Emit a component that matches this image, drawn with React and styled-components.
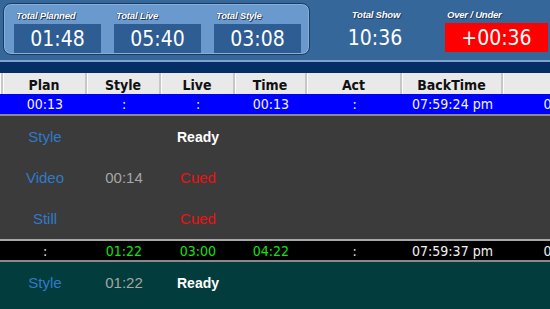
import React from "react";
import styled, { createGlobalStyle } from "styled-components";

const GlobalStyle = createGlobalStyle`
  html, body { margin: 0; padding: 0; background: #3b3b3b; overflow: hidden; }
  * { box-sizing: border-box; }
`;

const COLS = "3px 84px 74px 74px 72px 95px 101px 162px";
const TAB_FONT = `"DejaVu Sans Condensed", "DejaVu Sans", sans-serif`;
const ARIAL = `"Liberation Sans", Arial, sans-serif`;

const Screen = styled.div`
  width: 550px;
  height: 309px;
  overflow: hidden;
  background: #3b3b3b;
  display: flex;
  flex-direction: column;
`;

const TopBar = styled.div`
  height: 60px;
  flex: none;
  background: #36679b;
  display: flex;
  align-items: flex-start;
  padding: 3px 0 0 3px;
`;

const TotalsPanel = styled.div`
  width: 307px;
  height: 52px;
  border: 1px solid #1d3a60;
  border-radius: 8px;
  background: #6999cd;
  box-shadow: inset 0 0 0 1px #86b0dc;
  display: flex;
  gap: 13px;
  padding: 6px 0 0 10px;
`;

const Stat = styled.div`
  display: flex;
  flex-direction: column;
  align-items: flex-start;
  width: 87px;
`;

const Label = styled.div`
  font-family: ${ARIAL};
  font-weight: bold;
  font-style: italic;
  font-size: 9.5px;
  line-height: 12px;
  height: 12px;
  white-space: nowrap;
  color: #ffffff;
  padding-left: 2px;
  letter-spacing: -0.2px;
  text-shadow: 1px 1px 0 #1f3a5c, -0.5px -0.5px 0 #1f3a5c;
`;

const ValueBox = styled.div`
  margin-top: 2px;
  width: ${(p) => p.$w || "87px"};
  height: 29px;
  background: ${(p) => p.$bg || "#2d5d93"};
  color: #ffffff;
  font-family: ${TAB_FONT};
  font-size: 21px;
  display: flex;
  align-items: center;
  justify-content: center;
`;

const ShowBlock = styled.div`
  margin-left: 25px;
  width: 80px;
  display: flex;
  flex-direction: column;
  align-items: center;
  padding-top: 6px;
`;

const OverBlock = styled.div`
  margin-left: 30px;
  display: flex;
  flex-direction: column;
  padding-top: 6px;
`;

const Rule = styled.div`
  height: 2px;
  flex: none;
  background: #7fa2cc;
`;

const NavyBand = styled.div`
  height: 11px;
  flex: none;
  background: #052d66;
`;

const Row = styled.div`
  display: grid;
  grid-template-columns: ${COLS};
  width: 665px;
  flex: none;
  height: ${(p) => p.$h}px;
  background: ${(p) => p.$bg};
  align-items: center;
  border-top: ${(p) => p.$top || "none"};
  border-bottom: ${(p) => p.$bottom || "none"};
`;

const HeadCell = styled.div`
  height: 100%;
  display: flex;
  align-items: center;
  justify-content: center;
  padding-top: 2px;
  font-family: ${TAB_FONT};
  font-weight: bold;
  font-size: 14px;
  color: #111;
  border-right: 2px solid #c6c6c6;
  box-shadow: inset 1px 0 0 #fbfbfb;
  background: #e9e9e9;
`;

const Cell = styled.div`
  text-align: center;
  font-family: ${TAB_FONT};
  font-size: 14px;
  color: ${(p) => p.$c || "#f2f2ff"};
  white-space: nowrap;
`;

const DetailCell = styled.div`
  text-align: center;
  font-family: ${ARIAL};
  font-size: ${(p) => (p.$bold ? "14px" : "15px")};
  font-weight: ${(p) => (p.$bold ? "bold" : "normal")};
  color: ${(p) => p.$c};
  white-space: nowrap;
`;

const BLUE = "#3179c9";
const GRAY = "#a6a6a6";
const RED = "#f01010";
const GREEN = "#14e014";

const headers = ["", "Plan", "Style", "Live", "Time", "Act", "BackTime", ""];

function DetailRow({ bg, label, time, status, statusColor, bold }) {
  return (
    <Row $h={41} $bg={bg}>
      <span />
      <DetailCell $c={BLUE}>{label}</DetailCell>
      <DetailCell $c={GRAY}>{time}</DetailCell>
      <DetailCell $c={statusColor} $bold={bold}>{status}</DetailCell>
    </Row>
  );
}

export default function App() {
  return (
    <>
      <GlobalStyle />
      <Screen>
        <TopBar>
          <TotalsPanel>
            <Stat>
              <Label>Total Planned</Label>
              <ValueBox>01:48</ValueBox>
            </Stat>
            <Stat>
              <Label>Total Live</Label>
              <ValueBox>05:40</ValueBox>
            </Stat>
            <Stat>
              <Label>Total Style</Label>
              <ValueBox>03:08</ValueBox>
            </Stat>
          </TotalsPanel>
          <ShowBlock>
            <Label>Total Show</Label>
            <ValueBox $bg="transparent" $w="80px">10:36</ValueBox>
          </ShowBlock>
          <OverBlock>
            <Label>Over / Under</Label>
            <ValueBox $bg="#ff0000" $w="103px">+00:36</ValueBox>
          </OverBlock>
        </TopBar>
        <Rule />
        <NavyBand />
        <Row $h={21} $bg="#e9e9e9">
          {headers.map((h, i) => (
            <HeadCell key={i}>{h}</HeadCell>
          ))}
        </Row>
        <Row $h={22} $bg="#0000ff" $bottom="2px solid #8a8a8a">
          <span />
          <Cell>00:13</Cell>
          <Cell>:</Cell>
          <Cell>:</Cell>
          <Cell>00:13</Cell>
          <Cell>:</Cell>
          <Cell>07:59:24 pm</Cell>
          <Cell>07:59:24 pm</Cell>
        </Row>
        <DetailRow bg="#3b3b3b" label="Style" status="Ready" statusColor="#ffffff" bold />
        <DetailRow bg="#3b3b3b" label="Video" time="00:14" status="Cued" statusColor={RED} />
        <DetailRow bg="#3b3b3b" label="Still" status="Cued" statusColor={RED} />
        <Row $h={23} $bg="#000000" $top="2px solid #a8a8a8" $bottom="2px solid #8a8a8a">
          <span />
          <Cell $c="#e6e6e6">:</Cell>
          <Cell $c={GREEN}>01:22</Cell>
          <Cell $c={GREEN}>03:00</Cell>
          <Cell $c={GREEN}>04:22</Cell>
          <Cell $c="#e6e6e6">:</Cell>
          <Cell $c="#f2f2f2">07:59:37 pm</Cell>
          <Cell $c="#f2f2f2">07:59:37 pm</Cell>
        </Row>
        <DetailRow bg="#023c3c" label="Style" time="01:22" status="Ready" statusColor="#ffffff" bold />
        <Row $h={60} $bg="#023c3c" />
      </Screen>
    </>
  );
}
